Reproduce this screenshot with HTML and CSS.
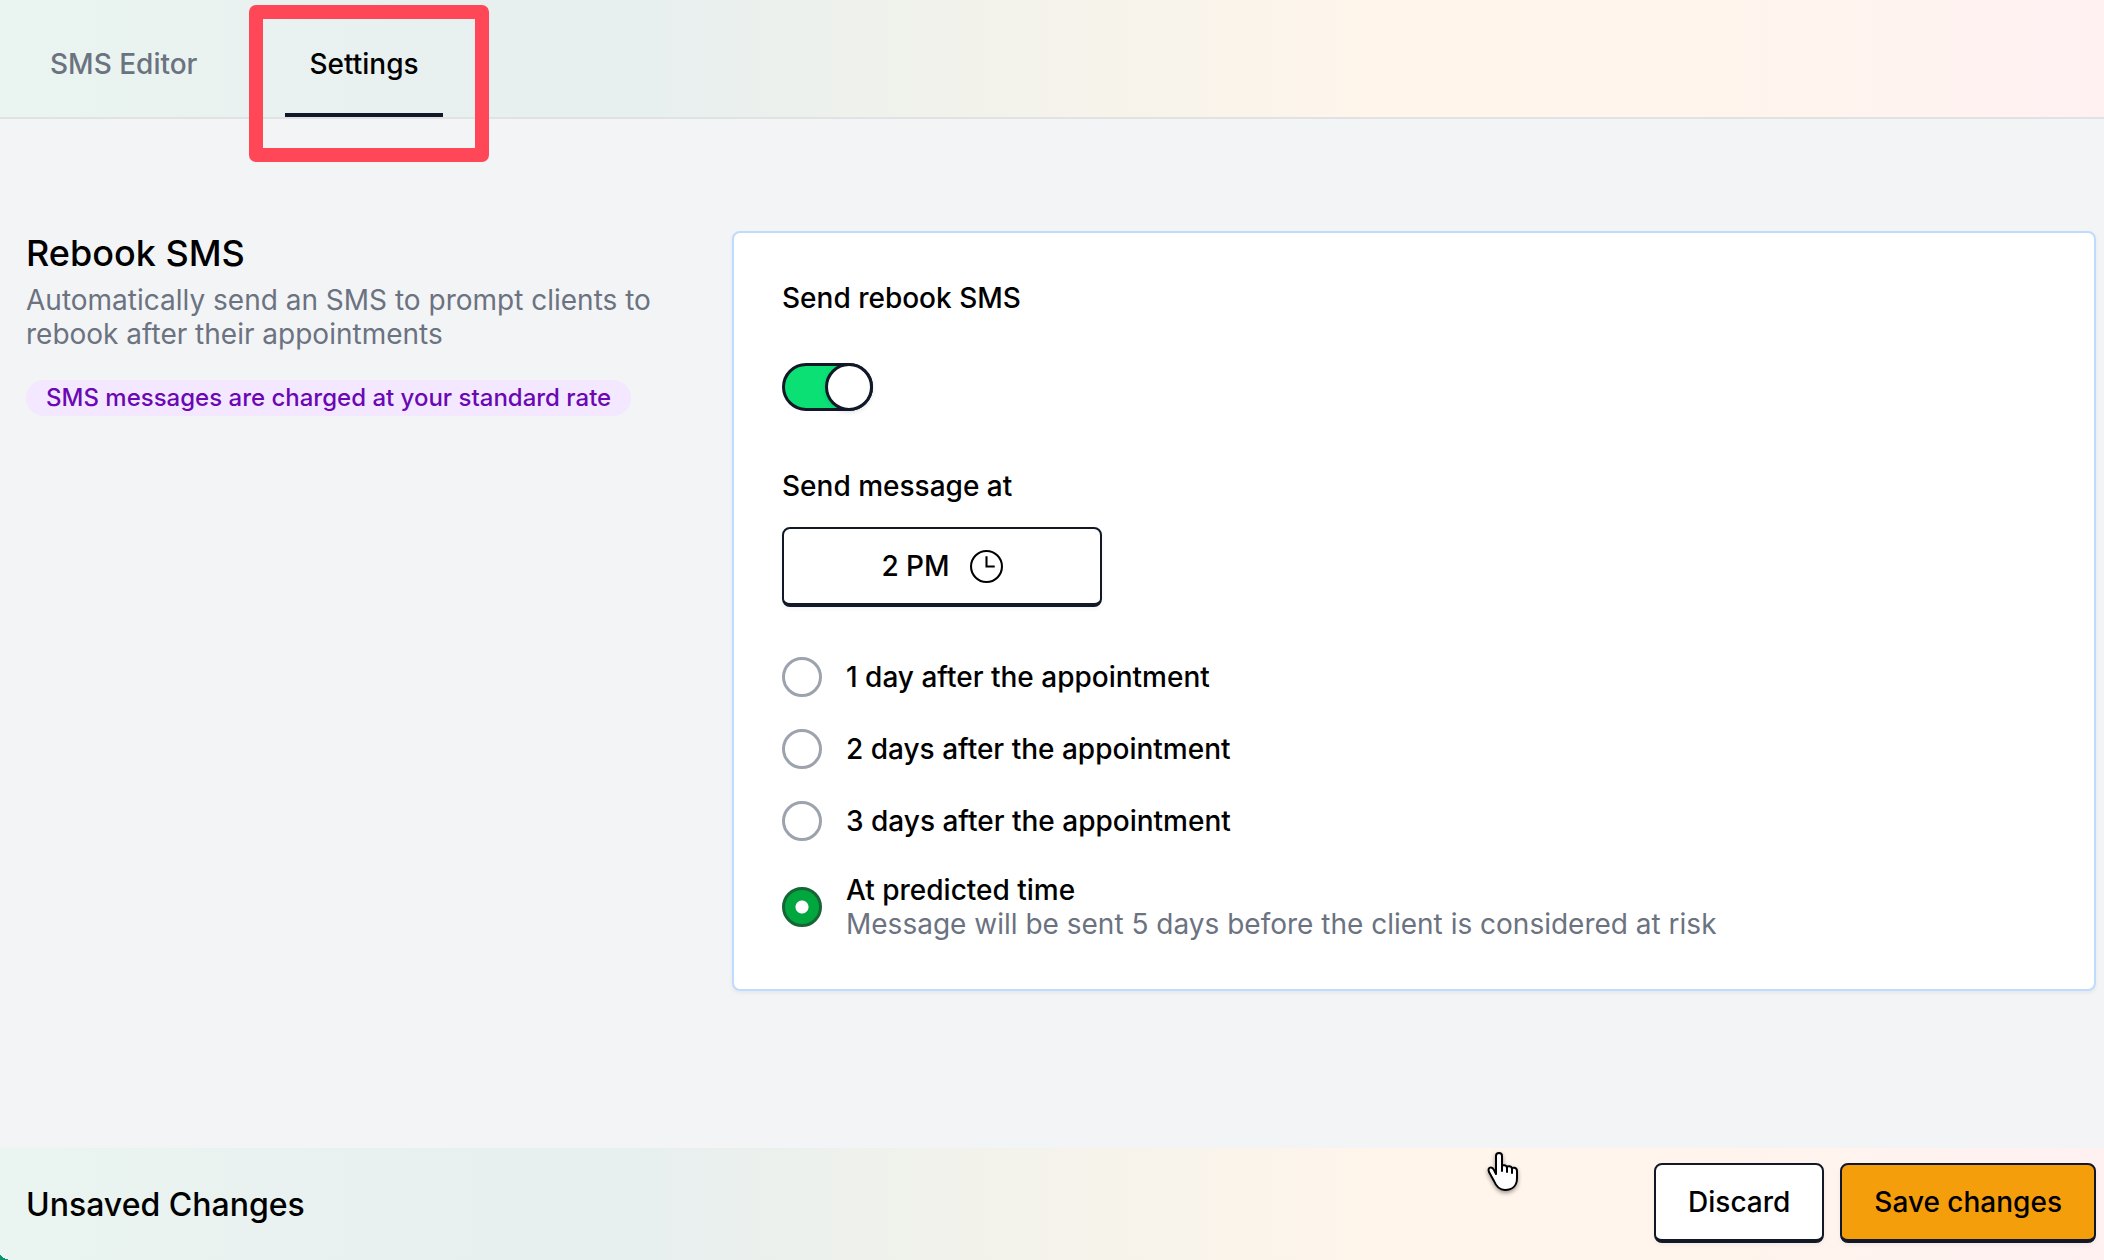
FILE: index.html
```html
<!DOCTYPE html>
<html lang="en">

<head>
    <meta charset="UTF-8" />
    <meta name="viewport" content="width=device-width, initial-scale=1.0" />
    <title>Rebook SMS - Settings</title>
    <link rel="stylesheet" href="styles.css">
</head>

<body>
    <header class="topbar">
        <nav class="tabs">
            <a href="#editor" class="tab">SMS Editor</a>
            <a href="#settings" class="tab tab-active" aria-current="page">Settings<span class="highlight"></span></a>
        </nav>
    </header>

    <main class="content">
        <section class="intro">
            <h1 class="intro-title">Rebook SMS</h1>
            <p class="intro-text">Automatically send an SMS to prompt clients to rebook after their appointments</p>
            <span class="pill">SMS messages are charged at your standard rate</span>
        </section>

        <form class="card" id="settings-form">
            <label class="label" for="rebook-toggle">Send rebook SMS</label>
            <input type="checkbox" class="toggle" id="rebook-toggle" checked />

            <span class="label" id="time-label">Send message at</span>
            <button type="button" class="btn btn-time" aria-describedby="time-label">
                2 PM
                <svg class="clock" viewBox="0 0 32 32" fill="none" stroke="currentColor" stroke-width="2">
                    <circle cx="16" cy="16" r="15" />
                    <path d="M16 6v10h8" />
                </svg>
            </button>

            <div class="options">
                <label class="option">
                    <input type="radio" class="radio" name="when" value="1" />
                    <span>1 day after the appointment</span>
                </label>
                <label class="option">
                    <input type="radio" class="radio" name="when" value="2" />
                    <span>2 days after the appointment</span>
                </label>
                <label class="option">
                    <input type="radio" class="radio" name="when" value="3" />
                    <span>3 days after the appointment</span>
                </label>
                <label class="option">
                    <input type="radio" class="radio" name="when" value="predicted" checked />
                    <span>At predicted time
                        <small class="option-hint">Message will be sent 5 days before the client is considered at risk</small>
                    </span>
                </label>
            </div>
        </form>
    </main>

    <footer class="savebar">
        <h2 class="savebar-title">Unsaved Changes</h2>
        <div class="actions">
            <button type="reset" form="settings-form" class="btn">Discard</button>
            <button type="submit" form="settings-form" class="btn btn-primary">Save changes</button>
        </div>
    </footer>

    <svg class="pointer" viewBox="0 0 32 42" fill="#fff" stroke="#000" stroke-width="2" stroke-linejoin="round" stroke-linecap="round">
        <path d="M9 23V5c0-4 6-4 6 0v11c0-3 5-2 5 1c0-3 5-2 5 1c0-2 5-2 5 2v7c0 7-4 12-12 12c-6 0-9-4-11-9L2 21c-2-5 3-6 5-2z" />
        <path d="M15 15v5M20 17v4M25 18v4" />
    </svg>
</body>

</html>
```

FILE: styles.css
```css
:root {
    --bar-gradient: linear-gradient(90deg, #eaf4f0 0%, #e7efef 30%, #f1f2eb 45%, #fff5eb 66%, #fff5ec 80%, #fff1f2 100%);
}

*,
*::before {
    box-sizing: border-box;
}

body {
    margin: 0;
    min-height: 100vh;
    display: flex;
    flex-direction: column;
    background-color: #f3f4f6;
    font-family: Inter, sans-serif;
    font-size: 28px;
    font-weight: 500;
    line-height: 34px;
    color: #000;
}

.topbar {
    border-bottom: 2px solid #e1e3e3;
    background-image: var(--bar-gradient);
}

.tabs {
    display: flex;
    gap: 64px;
    padding: 0 26px;
}

.tab {
    position: relative;
    padding: 47px 24px 32px;
    border-bottom: 4px solid transparent;
    color: #6b7280;
    text-decoration: none;
}

.tab-active {
    color: #000;
    border-bottom-color: #111827;
}

.highlight {
    position: absolute;
    top: 5px;
    left: -36px;
    right: -46px;
    bottom: -49px;
    border: 14px solid #ff4757;
    border-radius: 7px;
}

.content {
    flex: 1;
    display: grid;
    grid-template-columns: repeat(3, 1fr);
    gap: 48px;
    align-items: start;
    padding: 112px 8px 112px 26px;
}

.intro-title {
    margin: 0;
    font-size: 36px;
    font-weight: 500;
    line-height: 44px;
}

.intro-text {
    margin: 8px 0 28px;
    font-weight: 400;
    color: #6b7280;
}

.pill {
    display: inline-block;
    padding: 1px 20px;
    border-radius: 18px;
    background-color: #f3e8ff;
    font-size: 24px;
    color: #6b08b4;
}

.card {
    grid-column: span 2;
    display: flex;
    flex-direction: column;
    align-items: flex-start;
    padding: 48px;
    border: 2px solid #bfdbfe;
    border-radius: 8px;
    background-color: #fff;
    box-shadow: 0 2px 4px rgba(0, 0, 0, 0.06);
}

.toggle {
    appearance: none;
    width: 91px;
    height: 48px;
    margin: 48px 0 58px;
    border: 3px solid #111827;
    border-radius: 24px;
    background-color: #0be075;
    display: flex;
    justify-content: flex-end;
}

.toggle::before {
    content: "";
    width: 48px;
    height: 48px;
    margin: -3px;
    border: 3px solid #111827;
    border-radius: 50%;
    background-color: #fff;
    box-shadow: 0 2px 4px rgba(0, 0, 0, 0.1);
}

.toggle:not(:checked) {
    justify-content: flex-start;
    background-color: #e5e7eb;
}

.btn {
    display: flex;
    align-items: center;
    justify-content: center;
    gap: 20px;
    height: 80px;
    padding: 0 32px;
    border: 2px solid #111827;
    border-bottom-width: 4px;
    border-radius: 8px;
    background-color: #fff;
    box-shadow: 0 2px 4px rgba(0, 0, 0, 0.05);
    font: inherit;
    color: #000;
    cursor: pointer;
}

.btn-primary {
    background-color: #f59e0b;
}

.btn-time {
    width: 320px;
    margin: 24px 0 50px;
}

.clock {
    width: 33px;
    height: 33px;
}

.options {
    display: flex;
    flex-direction: column;
    gap: 32px;
}

.option {
    display: flex;
    align-items: center;
    gap: 24px;
}

.radio {
    appearance: none;
    flex: none;
    width: 40px;
    height: 40px;
    margin: 0;
    border: 3px solid #9ca3af;
    border-radius: 50%;
    background-color: #fff;
}

.radio:checked {
    border-color: #166534;
    background: radial-gradient(circle, #fff 6px, #00a63e 7px);
}

.option-hint {
    display: block;
    font-size: 28px;
    font-weight: 400;
    color: #6b7280;
}

/* the first layer is the green behind the rounded bottom left corner */
.savebar {
    display: flex;
    align-items: center;
    justify-content: space-between;
    padding: 15px 8px 17px 26px;
    background-image: radial-gradient(ellipse 12px 7px at right top, transparent 100%, #059669 100%), var(--bar-gradient);
    background-size: 12px 7px, auto;
    background-position: left bottom, left top;
    background-repeat: no-repeat;
}

.savebar-title {
    margin: 0;
    padding-top: 4px;
    font-size: 32px;
    font-weight: 500;
    line-height: 40px;
}

.actions {
    display: flex;
    gap: 16px;
}

.pointer {
    position: absolute;
    left: 1487px;
    top: 1151px;
    width: 32px;
    height: 42px;
    filter: drop-shadow(0 2px 2px rgba(0, 0, 0, 0.4));
    pointer-events: none;
}
```
